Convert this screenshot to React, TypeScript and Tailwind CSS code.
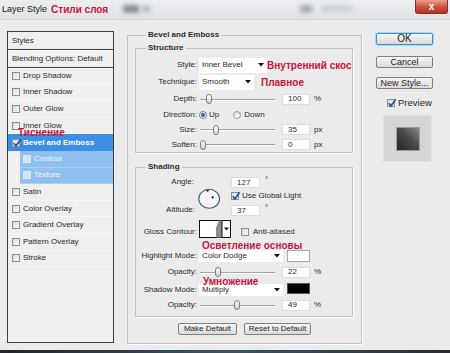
import React from "react";

const red = "text-[#c8143c]";

function Tri() {
  return (
    <svg width="6" height="4" viewBox="0 0 6 4" className="shrink-0">
      <path d="M0 0H6L3 3.6Z" fill="#111" />
    </svg>
  );
}

function Box({ checked = false, pale = false }: { checked?: boolean; pale?: boolean }) {
  const cls = pale
    ? "border-[#dbe9f8] bg-[#cfe2f6]"
    : "border-[#8f8f8f] bg-linear-to-br from-[#d9d9d9] to-[#fbfbfb]";
  return (
    <span className={`relative shrink-0 w-[8px] h-[8px] border ${cls}`}>
      {checked && (
        <svg width="10" height="10" viewBox="0 0 10 10" className="absolute left-[-1px] top-[-2px]">
          <path d="M1.8 5.2 L4 8 L8.6 1.2" stroke="#2850a8" strokeWidth="1.7" fill="none" />
        </svg>
      )}
    </span>
  );
}

function Slider({ at }: { at: number }) {
  return (
    <div className="relative w-[75px] h-[12px] flex items-center shrink-0">
      <div className="w-full h-[1px] bg-[#a3a3a3] shadow-[0_1px_0_#ffffff]" />
      <div
        className="absolute top-[1px] w-[6px] h-[10px] rounded-[3px] border border-[#7c7c7c] bg-linear-to-b from-white to-[#d2d2d2]"
        style={{ left: at - 3 }}
      />
    </div>
  );
}

function Field({ v, wide = false }: { v: string; wide?: boolean }) {
  return (
    <div
      className={`${wide ? "w-[29px]" : "w-[28px]"} h-[11px] shrink-0 bg-white border border-[#dcdcdc] flex items-center pl-[5px] text-[8px] leading-none`}
    >
      {v}
    </div>
  );
}

function Label({ children }: { children: React.ReactNode }) {
  return <span className="w-[61px] shrink-0 text-right">{children}</span>;
}

function Select({ text, w }: { text: string; w: string }) {
  return (
    <div className={`${w} h-full bg-white flex items-center justify-between pl-[3px] pr-[3px]`}>
      <span>{text}</span>
      <Tri />
    </div>
  );
}

function Btn({ children, w, def = false, size = "text-[9px]" }: { children: React.ReactNode; w: string; def?: boolean; size?: string }) {
  return (
    <div
      className={`${w} h-[12px] rounded-[2px] border ${
        def ? "border-[#3d8fd0] shadow-[0_0_0_1px_#a9d4f2]" : "border-[#7f7f7f]"
      } bg-linear-to-b from-[#f6f6f6] to-[#d9d9d9] flex items-center justify-center whitespace-nowrap ${size} leading-none text-[#1e1e1e]`}
    >
      {children}
    </div>
  );
}

const listItems: { label: string; kind?: "sel" | "sub" }[] = [
  { label: "Drop Shadow" },
  { label: "Inner Shadow" },
  { label: "Outer Glow" },
  { label: "Inner Glow" },
  { label: "Bevel and Emboss", kind: "sel" },
  { label: "Contour", kind: "sub" },
  { label: "Texture", kind: "sub" },
  { label: "Satin" },
  { label: "Color Overlay" },
  { label: "Gradient Overlay" },
  { label: "Pattern Overlay" },
  { label: "Stroke" },
];

export default function App() {
  return (
    <div className="relative w-[450px] h-[353px] overflow-hidden bg-[#ebebeb] flex flex-col text-[#2a2a2a] font-['Liberation_Sans',Arial,sans-serif]">
      {/* title bar */}
      <div className="h-[20px] shrink-0 flex items-start bg-linear-to-b from-[#eceef0] to-[#e0e3e6] border-b border-[#d3d6d9]">
        <div className="h-[19px] flex items-center pl-[2px] text-[9px] text-[#1a1a1a]">Layer Style</div>
        <div className={`h-[19px] flex items-center ml-[4px] text-[10px] font-bold ${red}`}>Стили слоя</div>
        <div className="ml-[15px] mt-[5px] w-[16px] h-[8px] bg-[#8c9095] blur-[2px]" />
        <div className="ml-[3px] mt-[6px] w-[8px] h-[6px] bg-[#b4b7bb] blur-[2px]" />
        <div className="ml-[150px] mt-[5px] w-[12px] h-[8px] bg-[#a9acb0] blur-[2px]" />
        <div className="ml-[10px] mt-[6px] w-[30px] h-[5px] bg-[#c8cbce] blur-[2px]" />
        <div className="ml-auto mr-[2px] w-[33px] h-[14px] rounded-b-[3px] border border-t-0 border-[#8a3123] bg-linear-to-b from-[#e8a08e] via-[#cc5640] to-[#b5341f] flex items-center justify-center text-white text-[10px] font-bold leading-none">
          x
        </div>
      </div>

      {/* body */}
      <div className="flex-1 flex items-start text-[8px] leading-[10px]">
        {/* left list */}
        <div className="ml-[7px] mt-[11px] w-[107px] h-[312px] shrink-0 border border-[#3e3e3e] bg-[#efefef] flex flex-col">
          <div className="h-[18px] border-b border-[#3e3e3e] shadow-[0_1px_0_#ffffff] flex items-center pl-[4px]">Styles</div>
          <div className="h-[18px] border-b border-[#3e3e3e] shadow-[0_1px_0_#ffffff] flex items-center pl-[4px]">
            Blending Options: Default
          </div>
          {listItems.map((it) =>
            it.kind === "sel" ? (
              <div key={it.label} className="h-[16.6px] bg-[#3b8fe4] text-white font-bold flex items-center gap-[3px] pl-[4px]">
                <Box checked />
                <span>{it.label}</span>
              </div>
            ) : it.kind === "sub" ? (
              <div key={it.label} className="h-[16.6px] ml-[12px] bg-[#8fc0ee] text-[#f4f8fc] flex items-center gap-[3px] pl-[3px] border-b border-[#a8cff2]">
                <Box pale />
                <span>{it.label}</span>
              </div>
            ) : (
              <div key={it.label} className="h-[16.6px] flex items-center gap-[3px] pl-[4px] border-b border-[#f7f7f7]">
                <Box />
                <span>{it.label}</span>
              </div>
            )
          )}
        </div>

        {/* main */}
        <fieldset className="ml-[13px] mt-[10px] w-[235px] h-[314px] shrink-0 border border-[#c2c2c2] shadow-[1px_1px_0_#ffffff] px-[7px]">
          <legend className="ml-[11px] px-[2px] font-bold leading-[10px]">Bevel and Emboss</legend>
          <div className="pt-[3px]">
            <fieldset className="w-[218px] border border-[#c2c2c2] shadow-[1px_1px_0_#ffffff]">
              <legend className="ml-[10px] px-[2px] font-bold leading-[10px]">Structure</legend>
              <div className="pt-[4px] flex flex-col">
                <div className="h-[16px] flex items-center">
                  <Label>Style:</Label>
                  <div className="ml-[2px] h-[15px]">
                    <Select text="Inner Bevel" w="w-[68px]" />
                  </div>
                </div>
                <div className="mt-[1px] h-[16px] flex items-center">
                  <Label>Technique:</Label>
                  <div className="ml-[2px] h-[15px]">
                    <Select text="Smooth" w="w-[55px]" />
                  </div>
                </div>
                <div className="mt-[1px] h-[16px] flex items-center">
                  <Label>Depth:</Label>
                  <div className="ml-[3px]">
                    <Slider at={9} />
                  </div>
                  <div className="ml-[7px]">
                    <Field v="100" />
                  </div>
                  <span className="ml-[4px]">%</span>
                </div>
                <div className="h-[15px] flex items-center">
                  <Label>Direction:</Label>
                  <span className="ml-[2px] w-[8px] h-[8px] rounded-full border border-[#7d7d7d] bg-linear-to-b from-[#e4e4e4] to-white flex items-center justify-center">
                    <span className="w-[4px] h-[4px] rounded-full bg-[#2c62c2]" />
                  </span>
                  <span className="ml-[2px]">Up</span>
                  <span className="ml-[14px] w-[8px] h-[8px] rounded-full border border-[#9a9a9a] bg-linear-to-b from-[#dedede] to-white" />
                  <span className="ml-[3px]">Down</span>
                </div>
                <div className="h-[15px] flex items-center">
                  <Label>Size:</Label>
                  <div className="ml-[3px]">
                    <Slider at={16} />
                  </div>
                  <div className="ml-[7px]">
                    <Field v="35" />
                  </div>
                  <span className="ml-[4px]">px</span>
                </div>
                <div className="h-[15px] flex items-center">
                  <Label>Soften:</Label>
                  <div className="ml-[3px]">
                    <Slider at={2.5} />
                  </div>
                  <div className="ml-[7px]">
                    <Field v="0" />
                  </div>
                  <span className="ml-[4px]">px</span>
                </div>
              </div>
            </fieldset>

            <fieldset className="mt-[9px] w-[218px] border border-[#c2c2c2] shadow-[1px_1px_0_#ffffff]">
              <legend className="ml-[10px] px-[2px] font-bold leading-[10px]">Shading</legend>
              <div className="pt-[4px] pb-[4px] flex flex-col">
                {/* angle block */}
                <div className="h-[41px] flex items-start">
                  <div className="w-[61px] h-full shrink-0 flex flex-col justify-between items-end pt-[1px] pb-[2px]">
                    <span className="mr-[3px]">Angle:</span>
                    <span className="mr-[2px]">Altitude:</span>
                  </div>
                  <svg width="24" height="22" viewBox="0 0 24 22" className="ml-[1px] mt-[12px] shrink-0">
                    <ellipse cx="11.2" cy="10.8" rx="10.4" ry="9.5" fill="#f6f6f6" stroke="#4e5d7c" strokeWidth="1.1" />
                    <path d="M9.7 1.3V4.1M8.3 2.7H11.1" stroke="#222" strokeWidth="0.8" />
                    <circle cx="14.7" cy="9.3" r="1.1" fill="#111" />
                  </svg>
                  <div className="ml-[9px] flex flex-col">
                    <div className="mt-[1px] h-[11px] flex items-start">
                      <Field v="127" wide />
                      <span className="ml-[5px] -mt-[2px]">°</span>
                    </div>
                    <div className="mt-[2px] h-[12px] flex items-center gap-[3px]">
                      <Box checked />
                      <span>Use Global Light</span>
                    </div>
                    <div className="mt-[3px] h-[11px] flex items-start">
                      <Field v="37" wide />
                      <span className="ml-[5px] -mt-[2px]">°</span>
                    </div>
                  </div>
                </div>

                {/* gloss contour */}
                <div className="mt-[3px] h-[18px] flex items-end">
                  <span className="w-[61px] shrink-0 text-right pb-[1px]">Gloss Contour:</span>
                  <svg width="32" height="18" viewBox="0 0 32 18" className="ml-[2px] shrink-0">
                    <rect x="0.5" y="0.5" width="31" height="17" fill="#ffffff" stroke="#111" />
                    <path d="M17 17.5 L17 9 C18.5 6 19 3 20.5 0.5 L23 0.5 L23 17.5 Z" fill="#8c8c8c" />
                    <path d="M17 9 C18.5 6 19 3 20.5 0.5" stroke="#555" strokeWidth="0.6" fill="none" />
                    <path d="M23 0.5 V17.5" stroke="#111" strokeWidth="1" />
                    <path d="M25 7.5H30L27.5 10.5Z" fill="#111" />
                  </svg>
                  <div className="ml-[10px] h-[12px] flex items-center gap-[4px] pb-[1px]">
                    <Box />
                    <span>Anti-aliased</span>
                  </div>
                </div>

                {/* highlight mode */}
                <div className="mt-[12px] h-[12px] flex items-center">
                  <Label>Highlight Mode:</Label>
                  <div className="ml-[2px] h-[12px]">
                    <Select text="Color Dodge" w="w-[84px]" />
                  </div>
                  <div className="ml-[4px] w-[23px] h-[12px] bg-white border border-[#a8a8a8]" />
                </div>
                <div className="mt-[3px] h-[14px] flex items-center">
                  <Label>Opacity:</Label>
                  <div className="ml-[3px]">
                    <Slider at={18} />
                  </div>
                  <div className="ml-[7px]">
                    <Field v="22" />
                  </div>
                  <span className="ml-[4px]">%</span>
                </div>
                <div className="mt-[4px] h-[14px] flex items-center">
                  <Label>Shadow Mode:</Label>
                  <div className="ml-[2px] h-[12px]">
                    <Select text="Multiply" w="w-[84px]" />
                  </div>
                  <div className="ml-[4px] w-[23px] h-[11px] bg-black border border-[#555] self-start" />
                </div>
                <div className="mt-[1px] h-[14px] flex items-center">
                  <Label>Opacity:</Label>
                  <div className="ml-[3px]">
                    <Slider at={37} />
                  </div>
                  <div className="ml-[7px]">
                    <Field v="49" />
                  </div>
                  <span className="ml-[4px]">%</span>
                </div>
              </div>
            </fieldset>

            <div className="mt-[6px] flex justify-center gap-[7px]">
              <Btn w="w-[59px]" size="text-[8px]">Make Default</Btn>
              <Btn w="w-[67px]" size="text-[8px]">Reset to Default</Btn>
            </div>
          </div>
        </fieldset>

        {/* right column */}
        <div className="ml-[14px] mt-[13px] w-[57px] shrink-0 flex flex-col">
          <Btn w="w-[57px]" def size="text-[10px]">OK</Btn>
          <div className="mt-[11px]">
            <Btn w="w-[57px]" size="text-[9px]">Cancel</Btn>
          </div>
          <div className="mt-[9px]">
            <Btn w="w-[57px]" size="text-[9px]">New Style...</Btn>
          </div>
          <div className="mt-[9px] h-[10px] flex items-center gap-[3px] pl-[11px] text-[9.5px]">
            <Box checked />
            <span>Preview</span>
          </div>
          <div className="mt-[7px] ml-[7px] w-[49px] h-[47px] bg-[#d5d5d5] border border-[#e2e2e2] flex items-center justify-center">
            <div className="w-[24px] h-[24px] border border-[#9d9d9d] bg-linear-to-tr from-[#262626] via-[#454545] to-[#8a8a8a]" />
          </div>
        </div>
      </div>

      {/* bottom strip */}
      <div className="h-[3px] shrink-0 bg-linear-to-r from-[#1f252b] via-[#3d5262] to-[#272d34]" />

      {/* red annotations */}
      <span className={`absolute left-[18px] top-[128px] text-[10px] font-bold leading-[10px] ${red}`}>Тиснение</span>
      <span className={`absolute left-[267px] top-[61px] text-[10px] font-bold leading-[10px] ${red}`}>Внутренний скос</span>
      <span className={`absolute left-[261px] top-[78px] text-[10px] font-bold leading-[10px] ${red}`}>Плавное</span>
      <span className={`absolute left-[202px] top-[241px] text-[10px] font-bold leading-[10px] ${red}`}>Осветление основы</span>
      <span className={`absolute left-[203px] top-[277px] text-[10px] font-bold leading-[10px] ${red}`}>Умножение</span>
    </div>
  );
}
